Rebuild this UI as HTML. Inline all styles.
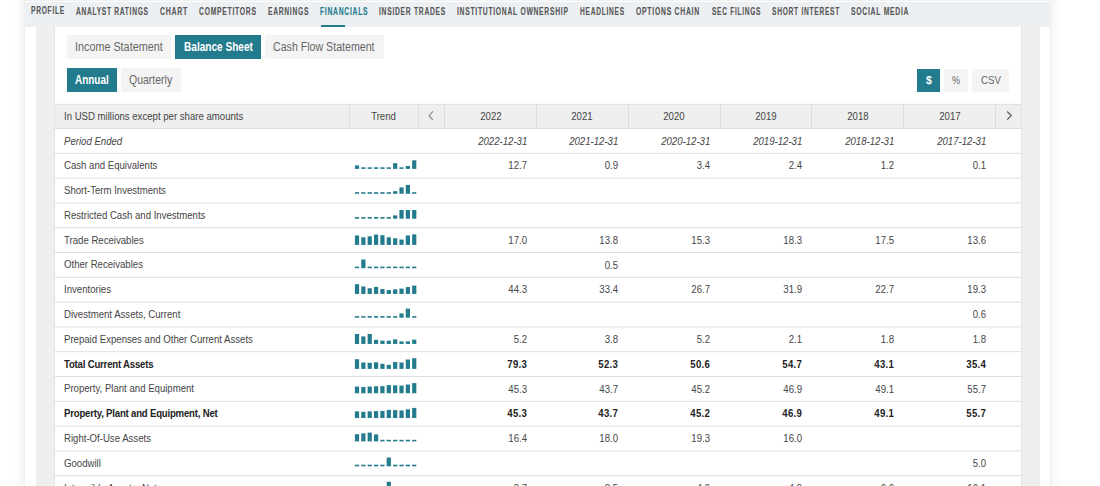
<!DOCTYPE html><html><head><meta charset="utf-8"><style>
*{margin:0;padding:0;box-sizing:border-box}
html,body{width:1100px;height:486px;overflow:hidden;background:#fff;font-family:"Liberation Sans",sans-serif}
.a{position:absolute}
.t{position:absolute;white-space:nowrap;font-size:10px;line-height:12px;color:#454545;letter-spacing:0;transform:scaleX(0.96);transform-origin:0 0}
.b{font-weight:bold;color:#222;letter-spacing:-0.21px}
.r{text-align:right;transform-origin:100% 0}
.c{text-align:center;transform-origin:50% 0}
.nv{position:absolute;top:4px;white-space:nowrap;font-size:11px;line-height:14px;font-weight:bold;color:#575757;transform-origin:0 0;-webkit-text-stroke:0.15px currentColor}
.bt{position:absolute;white-space:nowrap;line-height:12px;transform-origin:0 0}
.on{background:#237b8e;color:#fff;font-weight:bold;letter-spacing:-0.5px}
.hl{position:absolute;height:1px;background:#e2e2e2}
.vl{position:absolute;width:1px;background:#dcdcdc}
.bar{position:absolute;width:4.2px;background:#237b8e}
</style></head><body>

<div class="a" style="left:24.7px;top:-20px;width:1025.6px;height:520px;box-shadow:0 0 12px rgba(0,0,0,0.09),0 0 2px rgba(0,0,0,0.06);background:#fff"></div>
<div class="a" style="left:12px;top:0;width:1051px;height:1px;background:linear-gradient(90deg,#fff 0,#f0f0f0 13px,#f0f0f0 1038px,#fff 1051px)"></div>
<div class="a" style="left:24.7px;top:2px;width:1025.6px;height:25px;background:#edf0f3"></div>
<div class="nv" style="left:30.7px;top:3px;color:#575757;letter-spacing:1.2px;transform:scaleX(0.6051)">PROFILE</div>
<div class="nv" style="left:75.8px;top:4px;color:#575757;letter-spacing:1.2px;transform:scaleX(0.6026)">ANALYST RATINGS</div>
<div class="nv" style="left:159.8px;top:4px;color:#575757;letter-spacing:1.2px;transform:scaleX(0.6305)">CHART</div>
<div class="nv" style="left:198.7px;top:4px;color:#575757;letter-spacing:1.2px;transform:scaleX(0.6163)">COMPETITORS</div>
<div class="nv" style="left:267.6px;top:4px;color:#575757;letter-spacing:1.2px;transform:scaleX(0.6079)">EARNINGS</div>
<div class="nv" style="left:320.0px;top:4px;color:#237b8e;letter-spacing:1.2px;transform:scaleX(0.6136)">FINANCIALS</div>
<div class="nv" style="left:379.3px;top:4px;color:#575757;letter-spacing:1.2px;transform:scaleX(0.6110)">INSIDER TRADES</div>
<div class="nv" style="left:457.4px;top:4px;color:#575757;letter-spacing:1.2px;transform:scaleX(0.6133)">INSTITUTIONAL OWNERSHIP</div>
<div class="nv" style="left:580.4px;top:4px;color:#575757;letter-spacing:1.2px;transform:scaleX(0.6028)">HEADLINES</div>
<div class="nv" style="left:636.4px;top:4px;color:#575757;letter-spacing:1.2px;transform:scaleX(0.6208)">OPTIONS CHAIN</div>
<div class="nv" style="left:711.9px;top:4px;color:#575757;letter-spacing:1.2px;transform:scaleX(0.5983)">SEC FILINGS</div>
<div class="nv" style="left:772.2px;top:4px;color:#575757;letter-spacing:1.2px;transform:scaleX(0.6033)">SHORT INTEREST</div>
<div class="nv" style="left:851.2px;top:4px;color:#575757;letter-spacing:1.2px;transform:scaleX(0.6179)">SOCIAL MEDIA</div>
<div class="a" style="left:321.2px;top:24.5px;width:23.6px;height:2px;background:#237b8e"></div>
<div class="a" style="left:36.2px;top:27px;width:18.5px;height:460px;background:#efefef"></div>
<div class="a" style="left:1021.5px;top:27px;width:18.3px;height:460px;background:#efefef"></div>
<div class="a" style="left:54px;top:27px;width:1px;height:460px;background:#e4e4e4"></div>
<div class="a" style="left:1021px;top:27px;width:1px;height:460px;background:#e4e4e4"></div>
<div class="a" style="left:67px;top:35.4px;width:104px;height:23.2px;background:#f4f4f4"></div>
<div class="bt" style="left:75.0px;top:41.0px;font-size:12px;color:#666;font-weight:normal;transform:scaleX(0.9)">Income Statement</div>
<div class="a" style="left:175px;top:35.4px;width:86.4px;height:23.2px;background:#237b8e"></div>
<div class="bt" style="left:183.6px;top:41.0px;font-size:12px;color:#fff;font-weight:bold;transform:scaleX(0.84)">Balance Sheet</div>
<div class="a" style="left:265.2px;top:35.4px;width:119px;height:23.2px;background:#f4f4f4"></div>
<div class="bt" style="left:273.3px;top:41.0px;font-size:12px;color:#666;font-weight:normal;transform:scaleX(0.885)">Cash Flow Statement</div>
<div class="a" style="left:67px;top:68.4px;width:50px;height:23.2px;background:#237b8e"></div>
<div class="bt" style="left:74.6px;top:74.3px;font-size:12px;color:#fff;font-weight:bold;transform:scaleX(0.83)">Annual</div>
<div class="a" style="left:121px;top:68.4px;width:60px;height:23.2px;background:#f4f4f4"></div>
<div class="bt" style="left:129.0px;top:74.3px;font-size:12px;color:#666;font-weight:normal;transform:scaleX(0.875)">Quarterly</div>
<div class="a" style="left:917.2px;top:68.5px;width:22.8px;height:23.2px;background:#237b8e"></div>
<div class="bt" style="left:925.6px;top:74.0px;font-size:11.5px;color:#fff;font-weight:bold;transform:scaleX(0.92)">$</div>
<div class="a" style="left:944px;top:68.5px;width:24.3px;height:23.2px;background:#f4f4f4"></div>
<div class="bt" style="left:951.6px;top:73.7px;font-size:11.5px;color:#666;font-weight:normal;transform:scaleX(0.78)">%</div>
<div class="a" style="left:972.1px;top:68.5px;width:37px;height:23.2px;background:#f4f4f4"></div>
<div class="bt" style="left:980.5px;top:73.7px;font-size:11.5px;color:#666;font-weight:normal;transform:scaleX(0.84)">CSV</div>
<div class="a" style="left:54.7px;top:104px;width:966.6999999999999px;height:24.5px;background:#efefef"></div>
<div class="vl" style="left:349px;top:104px;height:24.5px"></div>
<div class="vl" style="left:418px;top:104px;height:24.5px"></div>
<div class="vl" style="left:444px;top:104px;height:24.5px"></div>
<div class="vl" style="left:536px;top:104px;height:24.5px"></div>
<div class="vl" style="left:628px;top:104px;height:24.5px"></div>
<div class="vl" style="left:720px;top:104px;height:24.5px"></div>
<div class="vl" style="left:811px;top:104px;height:24.5px"></div>
<div class="vl" style="left:903px;top:104px;height:24.5px"></div>
<div class="vl" style="left:995px;top:104px;height:24.5px"></div>
<div class="t" style="left:64.0px;top:110.6px">In USD millions except per share amounts</div>
<div class="t c" style="left:349.4px;top:110.6px;width:69px">Trend</div>
<svg class="a" style="left:427px;top:110px" width="8" height="12"><path d="M5.9 1.4 L2.1 5.7 L5.9 10" fill="none" stroke="#8c8c8c" stroke-width="1.15"/></svg>
<svg class="a" style="left:1005px;top:110px" width="8" height="12"><path d="M2.2 1.5 L6.2 5.6 L2.2 9.7" fill="none" stroke="#555" stroke-width="1.2"/></svg>
<div class="t c" style="left:444.5px;top:110.6px;width:91.9px;color:#444">2022</div>
<div class="t c" style="left:536.4px;top:110.6px;width:91.9px;color:#444">2021</div>
<div class="t c" style="left:628.3px;top:110.6px;width:91.9px;color:#444">2020</div>
<div class="t c" style="left:720.2px;top:110.6px;width:91.9px;color:#444">2019</div>
<div class="t c" style="left:812.1px;top:110.6px;width:91.9px;color:#444">2018</div>
<div class="t c" style="left:904.0px;top:110.6px;width:91.9px;color:#444">2017</div>
<div class="t" style="left:64.0px;top:136.00px;font-style:italic">Period Ended</div>
<div class="t r" style="left:444.5px;top:136.10px;width:82.3px;font-style:italic">2022-12-31</div>
<div class="t r" style="left:536.4px;top:136.10px;width:82.3px;font-style:italic">2021-12-31</div>
<div class="t r" style="left:628.3px;top:136.10px;width:82.3px;font-style:italic">2020-12-31</div>
<div class="t r" style="left:720.2px;top:136.10px;width:82.3px;font-style:italic">2019-12-31</div>
<div class="t r" style="left:812.1px;top:136.10px;width:82.3px;font-style:italic">2018-12-31</div>
<div class="t r" style="left:904.0px;top:136.10px;width:82.3px;font-style:italic">2017-12-31</div>
<div class="t" style="left:64.0px;top:160.10px">Cash and Equivalents</div>
<div class="t r" style="left:444.5px;top:160.30px;width:82.0px;letter-spacing:0px">12.7</div>
<div class="t r" style="left:536.4px;top:160.30px;width:82.0px;letter-spacing:0px">0.9</div>
<div class="t r" style="left:628.3px;top:160.30px;width:82.0px;letter-spacing:0px">3.4</div>
<div class="t r" style="left:720.2px;top:160.30px;width:82.0px;letter-spacing:0px">2.4</div>
<div class="t r" style="left:812.1px;top:160.30px;width:82.0px;letter-spacing:0px">1.2</div>
<div class="t r" style="left:904.0px;top:160.30px;width:82.0px;letter-spacing:0px">0.1</div>
<div class="t" style="left:64.0px;top:184.90px">Short-Term Investments</div>
<div class="t" style="left:64.0px;top:209.70px">Restricted Cash and Investments</div>
<div class="t" style="left:64.0px;top:234.50px">Trade Receivables</div>
<div class="t r" style="left:444.5px;top:234.70px;width:82.0px;letter-spacing:0px">17.0</div>
<div class="t r" style="left:536.4px;top:234.70px;width:82.0px;letter-spacing:0px">13.8</div>
<div class="t r" style="left:628.3px;top:234.70px;width:82.0px;letter-spacing:0px">15.3</div>
<div class="t r" style="left:720.2px;top:234.70px;width:82.0px;letter-spacing:0px">18.3</div>
<div class="t r" style="left:812.1px;top:234.70px;width:82.0px;letter-spacing:0px">17.5</div>
<div class="t r" style="left:904.0px;top:234.70px;width:82.0px;letter-spacing:0px">13.6</div>
<div class="t" style="left:64.0px;top:259.30px">Other Receivables</div>
<div class="t r" style="left:536.4px;top:259.50px;width:82.0px;letter-spacing:0px">0.5</div>
<div class="t" style="left:64.0px;top:284.10px">Inventories</div>
<div class="t r" style="left:444.5px;top:284.30px;width:82.0px;letter-spacing:0px">44.3</div>
<div class="t r" style="left:536.4px;top:284.30px;width:82.0px;letter-spacing:0px">33.4</div>
<div class="t r" style="left:628.3px;top:284.30px;width:82.0px;letter-spacing:0px">26.7</div>
<div class="t r" style="left:720.2px;top:284.30px;width:82.0px;letter-spacing:0px">31.9</div>
<div class="t r" style="left:812.1px;top:284.30px;width:82.0px;letter-spacing:0px">22.7</div>
<div class="t r" style="left:904.0px;top:284.30px;width:82.0px;letter-spacing:0px">19.3</div>
<div class="t" style="left:64.0px;top:308.90px">Divestment Assets, Current</div>
<div class="t r" style="left:904.0px;top:309.10px;width:82.0px;letter-spacing:0px">0.6</div>
<div class="t" style="left:64.0px;top:333.70px">Prepaid Expenses and Other Current Assets</div>
<div class="t r" style="left:444.5px;top:333.90px;width:82.0px;letter-spacing:0px">5.2</div>
<div class="t r" style="left:536.4px;top:333.90px;width:82.0px;letter-spacing:0px">3.8</div>
<div class="t r" style="left:628.3px;top:333.90px;width:82.0px;letter-spacing:0px">5.2</div>
<div class="t r" style="left:720.2px;top:333.90px;width:82.0px;letter-spacing:0px">2.1</div>
<div class="t r" style="left:812.1px;top:333.90px;width:82.0px;letter-spacing:0px">1.8</div>
<div class="t r" style="left:904.0px;top:333.90px;width:82.0px;letter-spacing:0px">1.8</div>
<div class="t b" style="left:64.0px;top:358.50px">Total Current Assets</div>
<div class="t b r" style="left:444.5px;top:358.70px;width:82.0px;letter-spacing:0.26px">79.3</div>
<div class="t b r" style="left:536.4px;top:358.70px;width:82.0px;letter-spacing:0.26px">52.3</div>
<div class="t b r" style="left:628.3px;top:358.70px;width:82.0px;letter-spacing:0.26px">50.6</div>
<div class="t b r" style="left:720.2px;top:358.70px;width:82.0px;letter-spacing:0.26px">54.7</div>
<div class="t b r" style="left:812.1px;top:358.70px;width:82.0px;letter-spacing:0.26px">43.1</div>
<div class="t b r" style="left:904.0px;top:358.70px;width:82.0px;letter-spacing:0.26px">35.4</div>
<div class="t" style="left:64.0px;top:383.30px">Property, Plant and Equipment</div>
<div class="t r" style="left:444.5px;top:383.50px;width:82.0px;letter-spacing:0px">45.3</div>
<div class="t r" style="left:536.4px;top:383.50px;width:82.0px;letter-spacing:0px">43.7</div>
<div class="t r" style="left:628.3px;top:383.50px;width:82.0px;letter-spacing:0px">45.2</div>
<div class="t r" style="left:720.2px;top:383.50px;width:82.0px;letter-spacing:0px">46.9</div>
<div class="t r" style="left:812.1px;top:383.50px;width:82.0px;letter-spacing:0px">49.1</div>
<div class="t r" style="left:904.0px;top:383.50px;width:82.0px;letter-spacing:0px">55.7</div>
<div class="t b" style="left:64.0px;top:408.10px">Property, Plant and Equipment, Net</div>
<div class="t b r" style="left:444.5px;top:408.30px;width:82.0px;letter-spacing:0.26px">45.3</div>
<div class="t b r" style="left:536.4px;top:408.30px;width:82.0px;letter-spacing:0.26px">43.7</div>
<div class="t b r" style="left:628.3px;top:408.30px;width:82.0px;letter-spacing:0.26px">45.2</div>
<div class="t b r" style="left:720.2px;top:408.30px;width:82.0px;letter-spacing:0.26px">46.9</div>
<div class="t b r" style="left:812.1px;top:408.30px;width:82.0px;letter-spacing:0.26px">49.1</div>
<div class="t b r" style="left:904.0px;top:408.30px;width:82.0px;letter-spacing:0.26px">55.7</div>
<div class="t" style="left:64.0px;top:432.90px">Right-Of-Use Assets</div>
<div class="t r" style="left:444.5px;top:433.10px;width:82.0px;letter-spacing:0px">16.4</div>
<div class="t r" style="left:536.4px;top:433.10px;width:82.0px;letter-spacing:0px">18.0</div>
<div class="t r" style="left:628.3px;top:433.10px;width:82.0px;letter-spacing:0px">19.3</div>
<div class="t r" style="left:720.2px;top:433.10px;width:82.0px;letter-spacing:0px">16.0</div>
<div class="t" style="left:64.0px;top:457.70px">Goodwill</div>
<div class="t r" style="left:904.0px;top:457.90px;width:82.0px;letter-spacing:0px">5.0</div>
<div class="t" style="left:64.0px;top:482.50px">Intangible Assets, Net</div>
<div class="t r" style="left:444.5px;top:482.70px;width:82.0px;letter-spacing:0px">8.7</div>
<div class="t r" style="left:536.4px;top:482.70px;width:82.0px;letter-spacing:0px">8.5</div>
<div class="t r" style="left:628.3px;top:482.70px;width:82.0px;letter-spacing:0px">4.9</div>
<div class="t r" style="left:720.2px;top:482.70px;width:82.0px;letter-spacing:0px">4.9</div>
<div class="t r" style="left:812.1px;top:482.70px;width:82.0px;letter-spacing:0px">6.6</div>
<div class="t r" style="left:904.0px;top:482.70px;width:82.0px;letter-spacing:0px">16.1</div>
<svg class="a" style="left:0;top:0" width="1100" height="486"><g fill="#dedede"><rect x="54.7" y="103.8" width="966.7" height="1"/><rect x="54.7" y="128.00" width="966.7" height="1"/><rect x="54.7" y="152.80" width="966.7" height="1"/><rect x="54.7" y="177.60" width="966.7" height="1"/><rect x="54.7" y="202.40" width="966.7" height="1"/><rect x="54.7" y="227.20" width="966.7" height="1"/><rect x="54.7" y="252.00" width="966.7" height="1"/><rect x="54.7" y="276.80" width="966.7" height="1"/><rect x="54.7" y="301.60" width="966.7" height="1"/><rect x="54.7" y="326.40" width="966.7" height="1"/><rect x="54.7" y="351.20" width="966.7" height="1"/><rect x="54.7" y="376.00" width="966.7" height="1"/><rect x="54.7" y="400.80" width="966.7" height="1"/><rect x="54.7" y="425.60" width="966.7" height="1"/><rect x="54.7" y="450.40" width="966.7" height="1"/><rect x="54.7" y="475.20" width="966.7" height="1"/></g><g fill="#237b8e"><rect x="354.90" y="165.40" width="4.2" height="3.50"/><rect x="361.26" y="167.30" width="4.2" height="1.60"/><rect x="367.62" y="167.30" width="4.2" height="1.60"/><rect x="373.98" y="167.30" width="4.2" height="1.60"/><rect x="380.34" y="167.30" width="4.2" height="1.60"/><rect x="386.70" y="167.30" width="4.2" height="1.60"/><rect x="393.06" y="163.20" width="4.2" height="5.70"/><rect x="399.42" y="167.30" width="4.2" height="1.60"/><rect x="405.78" y="166.00" width="4.2" height="2.90"/><rect x="412.14" y="160.30" width="4.2" height="8.60"/><rect x="354.90" y="192.20" width="4.2" height="1.60"/><rect x="361.26" y="192.20" width="4.2" height="1.60"/><rect x="367.62" y="192.20" width="4.2" height="1.60"/><rect x="373.98" y="192.20" width="4.2" height="1.60"/><rect x="380.34" y="192.20" width="4.2" height="1.60"/><rect x="386.70" y="192.20" width="4.2" height="1.60"/><rect x="393.06" y="191.20" width="4.2" height="2.60"/><rect x="399.42" y="187.40" width="4.2" height="6.40"/><rect x="405.78" y="184.90" width="4.2" height="8.90"/><rect x="412.14" y="192.20" width="4.2" height="1.60"/><rect x="354.90" y="217.10" width="4.2" height="1.60"/><rect x="361.26" y="217.10" width="4.2" height="1.60"/><rect x="367.62" y="217.10" width="4.2" height="1.60"/><rect x="373.98" y="217.10" width="4.2" height="1.60"/><rect x="380.34" y="217.10" width="4.2" height="1.60"/><rect x="386.70" y="217.10" width="4.2" height="1.60"/><rect x="393.06" y="215.40" width="4.2" height="3.30"/><rect x="399.42" y="210.00" width="4.2" height="8.70"/><rect x="405.78" y="210.00" width="4.2" height="8.70"/><rect x="412.14" y="210.00" width="4.2" height="8.70"/><rect x="354.90" y="235.45" width="4.2" height="9.45"/><rect x="361.26" y="237.30" width="4.2" height="7.60"/><rect x="367.62" y="236.30" width="4.2" height="8.60"/><rect x="373.98" y="234.55" width="4.2" height="10.35"/><rect x="380.34" y="235.20" width="4.2" height="9.70"/><rect x="386.70" y="237.30" width="4.2" height="7.60"/><rect x="393.06" y="238.30" width="4.2" height="6.60"/><rect x="399.42" y="239.55" width="4.2" height="5.35"/><rect x="405.78" y="235.45" width="4.2" height="9.45"/><rect x="412.14" y="234.40" width="4.2" height="10.50"/><rect x="354.90" y="266.60" width="4.2" height="1.60"/><rect x="361.26" y="259.50" width="4.2" height="8.70"/><rect x="367.62" y="266.60" width="4.2" height="1.60"/><rect x="373.98" y="266.60" width="4.2" height="1.60"/><rect x="380.34" y="266.60" width="4.2" height="1.60"/><rect x="386.70" y="266.60" width="4.2" height="1.60"/><rect x="393.06" y="266.60" width="4.2" height="1.60"/><rect x="399.42" y="266.60" width="4.2" height="1.60"/><rect x="405.78" y="266.60" width="4.2" height="1.60"/><rect x="412.14" y="266.60" width="4.2" height="1.60"/><rect x="354.90" y="284.20" width="4.2" height="9.75"/><rect x="361.26" y="286.45" width="4.2" height="7.50"/><rect x="367.62" y="288.25" width="4.2" height="5.70"/><rect x="373.98" y="286.95" width="4.2" height="7.00"/><rect x="380.34" y="289.05" width="4.2" height="4.90"/><rect x="386.70" y="290.10" width="4.2" height="3.85"/><rect x="393.06" y="289.35" width="4.2" height="4.60"/><rect x="399.42" y="288.60" width="4.2" height="5.35"/><rect x="405.78" y="287.05" width="4.2" height="6.90"/><rect x="412.14" y="285.60" width="4.2" height="8.35"/><rect x="354.90" y="316.10" width="4.2" height="1.60"/><rect x="361.26" y="316.10" width="4.2" height="1.60"/><rect x="367.62" y="316.10" width="4.2" height="1.60"/><rect x="373.98" y="316.10" width="4.2" height="1.60"/><rect x="380.34" y="316.10" width="4.2" height="1.60"/><rect x="386.70" y="316.10" width="4.2" height="1.60"/><rect x="393.06" y="316.10" width="4.2" height="1.60"/><rect x="399.42" y="313.40" width="4.2" height="4.30"/><rect x="405.78" y="308.60" width="4.2" height="9.10"/><rect x="412.14" y="316.10" width="4.2" height="1.60"/><rect x="354.90" y="334.00" width="4.2" height="9.95"/><rect x="361.26" y="336.45" width="4.2" height="7.50"/><rect x="367.62" y="334.00" width="4.2" height="9.95"/><rect x="373.98" y="339.85" width="4.2" height="4.10"/><rect x="380.34" y="340.65" width="4.2" height="3.30"/><rect x="386.70" y="340.65" width="4.2" height="3.30"/><rect x="393.06" y="339.35" width="4.2" height="4.60"/><rect x="399.42" y="341.35" width="4.2" height="2.60"/><rect x="405.78" y="341.35" width="4.2" height="2.60"/><rect x="412.14" y="339.65" width="4.2" height="4.30"/><rect x="354.90" y="359.20" width="4.2" height="9.70"/><rect x="361.26" y="362.50" width="4.2" height="6.40"/><rect x="367.62" y="362.80" width="4.2" height="6.10"/><rect x="373.98" y="362.30" width="4.2" height="6.60"/><rect x="380.34" y="363.80" width="4.2" height="5.10"/><rect x="386.70" y="364.90" width="4.2" height="4.00"/><rect x="393.06" y="362.00" width="4.2" height="6.90"/><rect x="399.42" y="362.50" width="4.2" height="6.40"/><rect x="405.78" y="359.50" width="4.2" height="9.40"/><rect x="412.14" y="358.20" width="4.2" height="10.70"/><rect x="354.90" y="386.55" width="4.2" height="6.70"/><rect x="361.26" y="387.00" width="4.2" height="6.25"/><rect x="367.62" y="386.55" width="4.2" height="6.70"/><rect x="373.98" y="386.30" width="4.2" height="6.95"/><rect x="380.34" y="386.10" width="4.2" height="7.15"/><rect x="386.70" y="385.10" width="4.2" height="8.15"/><rect x="393.06" y="385.30" width="4.2" height="7.95"/><rect x="399.42" y="385.60" width="4.2" height="7.65"/><rect x="405.78" y="384.55" width="4.2" height="8.70"/><rect x="412.14" y="383.10" width="4.2" height="10.15"/><rect x="354.90" y="411.35" width="4.2" height="6.70"/><rect x="361.26" y="411.80" width="4.2" height="6.25"/><rect x="367.62" y="411.35" width="4.2" height="6.70"/><rect x="373.98" y="411.10" width="4.2" height="6.95"/><rect x="380.34" y="410.90" width="4.2" height="7.15"/><rect x="386.70" y="409.90" width="4.2" height="8.15"/><rect x="393.06" y="410.10" width="4.2" height="7.95"/><rect x="399.42" y="410.40" width="4.2" height="7.65"/><rect x="405.78" y="409.35" width="4.2" height="8.70"/><rect x="412.14" y="407.90" width="4.2" height="10.15"/><rect x="354.90" y="434.20" width="4.2" height="7.20"/><rect x="361.26" y="433.30" width="4.2" height="8.10"/><rect x="367.62" y="432.60" width="4.2" height="8.80"/><rect x="373.98" y="434.40" width="4.2" height="7.00"/><rect x="380.34" y="439.80" width="4.2" height="1.60"/><rect x="386.70" y="439.80" width="4.2" height="1.60"/><rect x="393.06" y="439.80" width="4.2" height="1.60"/><rect x="399.42" y="439.80" width="4.2" height="1.60"/><rect x="405.78" y="439.80" width="4.2" height="1.60"/><rect x="412.14" y="439.80" width="4.2" height="1.60"/><rect x="354.90" y="464.70" width="4.2" height="1.60"/><rect x="361.26" y="464.70" width="4.2" height="1.60"/><rect x="367.62" y="464.70" width="4.2" height="1.60"/><rect x="373.98" y="464.70" width="4.2" height="1.60"/><rect x="380.34" y="464.70" width="4.2" height="1.60"/><rect x="386.70" y="457.60" width="4.2" height="8.70"/><rect x="393.06" y="464.70" width="4.2" height="1.60"/><rect x="399.42" y="464.70" width="4.2" height="1.60"/><rect x="405.78" y="464.70" width="4.2" height="1.60"/><rect x="412.14" y="464.70" width="4.2" height="1.60"/><rect x="354.90" y="489.60" width="4.2" height="1.60"/><rect x="361.26" y="489.60" width="4.2" height="1.60"/><rect x="367.62" y="489.60" width="4.2" height="1.60"/><rect x="373.98" y="489.60" width="4.2" height="1.60"/><rect x="380.34" y="489.60" width="4.2" height="1.60"/><rect x="386.70" y="481.70" width="4.2" height="9.50"/><rect x="393.06" y="489.60" width="4.2" height="1.60"/><rect x="399.42" y="489.60" width="4.2" height="1.60"/><rect x="405.78" y="489.60" width="4.2" height="1.60"/><rect x="412.14" y="489.60" width="4.2" height="1.60"/></g></svg>
</body></html>
